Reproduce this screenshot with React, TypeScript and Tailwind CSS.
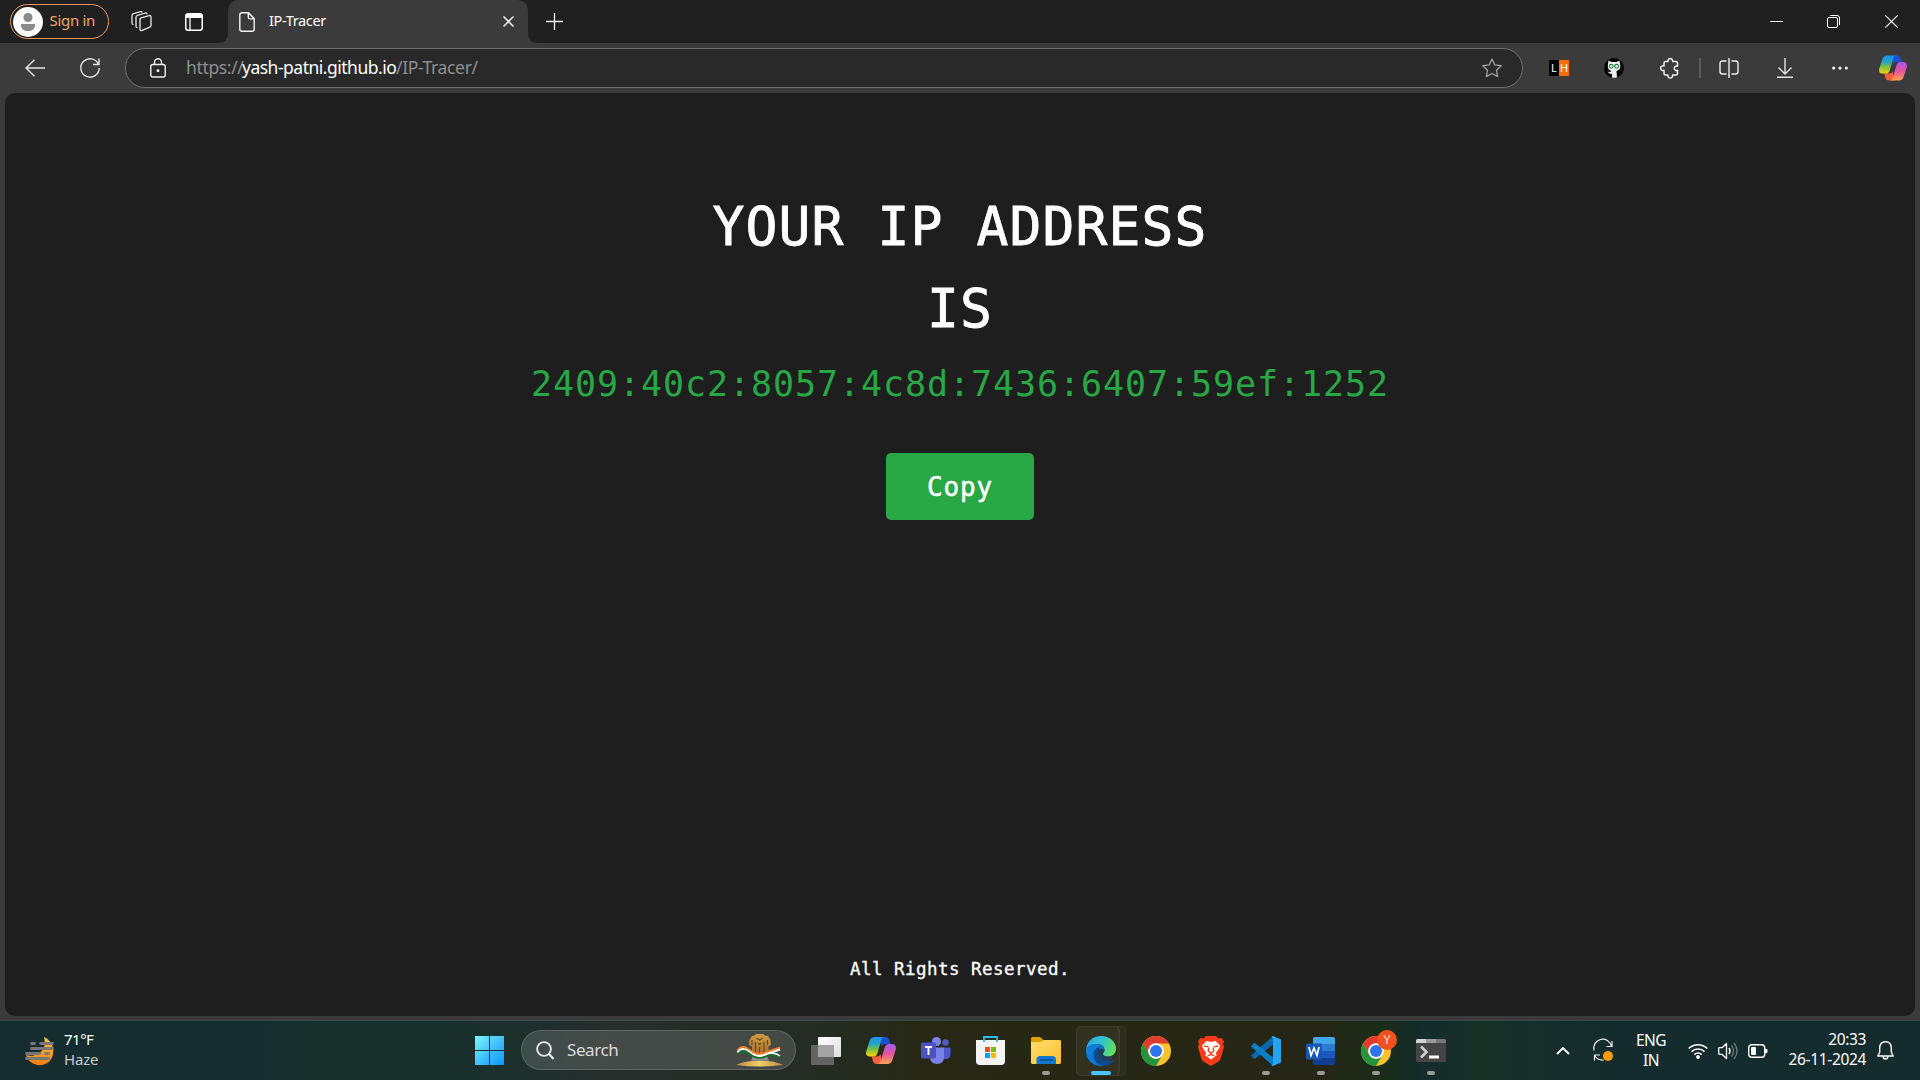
import React from "react";

const ui = "font-['Noto_Sans','Open_Sans',sans-serif]";

function Svg({ w, h, box, children, className = "" }: { w: number; h: number; box?: string; children: React.ReactNode; className?: string }) {
  return (
    <svg width={w} height={h} viewBox={box ?? `0 0 ${w} ${h}`} fill="none" className={`block shrink-0 overflow-visible ${className}`}>
      {children}
    </svg>
  );
}

function Copilot({ id, w, h }: { id: string; w: number; h: number }) {
  return (
    <Svg w={w} h={h} box="0 0 30 27">
      <defs>
        <linearGradient id={`${id}a`} x1="0" y1="0" x2="0" y2="1">
          <stop offset="0" stopColor="#1a8ff0" />
          <stop offset=".35" stopColor="#22a5c8" />
          <stop offset=".65" stopColor="#7fc23a" />
          <stop offset="1" stopColor="#ffd00a" />
        </linearGradient>
        <linearGradient id={`${id}b`} x1="0.3" y1="0" x2=".3" y2="1">
          <stop offset="0" stopColor="#a259ee" />
          <stop offset=".5" stopColor="#e4559c" />
          <stop offset="1" stopColor="#ffa34f" />
        </linearGradient>
      </defs>
      <path d="M14 0h5.500c2 0 3 1.200 3.600 3l1.300 4h-5.200c-2 0-3 .8-3.700 2.700z" fill="#1b4fd6" />
      <path d="M16 27h-5.500c-2 0-3-1.200-3.600-3l-1.300-4.500h5.200c2 0 3-.8 3.700-2.700z" fill="#f4603a" />
      <path d="M8.500 0H19c-2 0-3 1.200-3.700 3.400l-4 13c-.7 2-1.800 3.100-3.800 3.100H4c-3.500 0-4.600-2.500-3.700-5.500L3.600 4C4.400 1.400 6 0 8.500 0z" fill={`url(#${id}a)`} />
      <path d="M21.500 27H11c2 0 3-1.200 3.700-3.400l4-13c.7-2.300 1.800-3.600 3.800-3.600H26c3.500 0 4.600 3 3.700 6l-3.300 10c-.8 2.600-2.400 4-4.900 4z" fill={`url(#${id}b)`} />
    </Svg>
  );
}

function Chrome() {
  return (
    <Svg w={30} h={30} box="0 0 48 48">
      <circle cx="24" cy="24" r="24" fill="#fcc22e" />
      <path d="M3.200 12A24 24 0 0 1 44.800 12H24a12 12 0 0 0-10.400 18z" fill="#e03b2f" />
      <path d="M3.200 12A24 24 0 0 0 24 48l10.400-18a12 12 0 0 1-20.800 0z" fill="#24943f" />
      <circle cx="24" cy="24" r="12.500" fill="#fff" />
      <circle cx="24" cy="24" r="9.600" fill="#2b74ec" />
    </Svg>
  );
}

function TitleBar() {
  return (
    <div className="flex h-[43px] shrink-0 items-center bg-[#202020] text-white">
      <div className="ml-[10px] flex h-[35px] w-[99px] items-center rounded-full border-[1.500px] border-[#e79a61] pl-[1.500px]">
        <Svg w={30} h={30}>
          <circle cx="15" cy="15" r="15" fill="#fafafa" />
          <circle cx="15" cy="10.500" r="4.500" fill="#8a8a8a" />
          <path d="M8 17h14v1.500c0 3.500-3 5.500-7 5.500s-7-2-7-5.500z" fill="#8a8a8a" />
        </Svg>
        <span className="-mt-[2px] ml-[7px] whitespace-nowrap text-[15px] tracking-[-0.300px] text-[#f0a56e]">Sign in</span>
      </div>
      <Svg w={21} h={21} className="ml-[22px]">
        <g stroke="#e8e8e8" strokeWidth="1.300" strokeLinejoin="round" strokeLinecap="round">
          <path d="M9 8.500q0-1.200 1.200-1.600l8-2.300q1.800-.4 1.800 1.300v8.500q0 1.300-1.200 1.700l-7.600 3.200q-2.200.9-2.200-1z" />
          <path d="M6 16.500q-1-.3-1-1.600V6.300q0-1.500 1.500-2l8-2.300q1.300-.3 1.500.8" />
          <path d="M2 13.500q-1-.4-1-1.600V4.500Q1 3 2.500 2.600l7-2q1.300-.3 1.500.6" />
        </g>
      </Svg>
      <Svg w={18} h={18} className="ml-[33px]">
        <rect x=".75" y=".75" width="16.500" height="16.500" rx="2.500" stroke="#fff" strokeWidth="1.500" />
        <path d="M1 2.500Q1 1 3 1h12q2 0 2 1.500V5H1z" fill="#fff" />
        <path d="M5 5v12" stroke="#fff" strokeWidth="1.300" />
      </Svg>
      <Svg w={10} h={10} className="ml-[15px] self-end">
        <path d="M10 0v10H0Q10 10 10 0z" fill="#3b3b3b" />
      </Svg>
      <div className="flex h-full w-[300px] items-center rounded-t-[10px] bg-[#3b3b3b]">
        <Svg w={16} h={20} className="ml-[11px]">
          <path d="M3 .75h6.500l5.700 5.900V17q0 2.200-2.200 2.200H3Q.8 19.200.8 17V3Q.8.750 3 .75zM9.300 1v4.200q0 1.700 1.700 1.700h4" stroke="#f2f2f2" strokeWidth="1.400" />
        </Svg>
        <span className="-mt-[2px] ml-[14px] text-[14.500px] tracking-[-0.350px]">IP-Tracer</span>
        <Svg w={11} h={11} className="ml-auto mr-[14px]">
          <path d="M.5.500l10 10M10.500.500l-10 10" stroke="#fff" strokeWidth="1.400" />
        </Svg>
      </div>
      <Svg w={10} h={10} className="self-end">
        <path d="M0 0v10h10Q0 10 0 0z" fill="#3b3b3b" />
      </Svg>
      <Svg w={17} h={17} className="ml-[8px]">
        <path d="M8.500 0v17M0 8.500h17" stroke="#f0f0f0" strokeWidth="1.300" />
      </Svg>
      <Svg w={13} h={13} className="ml-auto">
        <path d="M0 6.500h13" stroke="#fff" />
      </Svg>
      <Svg w={13} h={13} className="ml-[44px]">
        <rect x=".5" y="2.500" width="10" height="10" rx="1.500" stroke="#fff" />
        <path d="M3 .5h7q2.500 0 2.500 2.500v7" stroke="#fff" />
      </Svg>
      <Svg w={13} h={13} className="ml-[45px] mr-[22px]">
        <path d="M.3.300l12.400 12.400M12.700.300L.3 12.700" stroke="#fff" strokeWidth="1.100" />
      </Svg>
    </div>
  );
}

function Toolbar() {
  return (
    <div className="flex h-[50px] shrink-0 items-center bg-[#3b3b3b] text-white">
      <Svg w={20} h={18} className="-mt-px ml-[25px]">
        <path d="M20 9H1M9.500.700L1 9l8.500 8.300" stroke="#e6e6e6" strokeWidth="1.400" />
      </Svg>
      <Svg w={20} h={20} className="ml-[35px]">
        <path d="M18.400 6.200A9.200 9.200 0 1 0 19.200 10M19 .5v6h-6" stroke="#e6e6e6" strokeWidth="1.400" />
      </Svg>
      <div className="ml-[25px] flex h-[40px] w-[1398px] items-center rounded-full border border-[#707070] bg-[#292929]">
        <Svg w={16} h={20} className="ml-[24px]">
          <rect x=".8" y="6.500" width="14.400" height="12.500" rx="2" stroke="#f0f0f0" strokeWidth="1.400" />
          <path d="M4.500 6.500V4.200a3.500 3.500 0 0 1 7 0v2.300" stroke="#f0f0f0" strokeWidth="1.400" />
          <circle cx="8" cy="12.700" r="1.400" fill="#fff" />
        </Svg>
        <div className="-mt-px ml-[20px] flex whitespace-nowrap text-[17.500px] text-[#8e8e8e]">
          <span className="w-[56px] tracking-[-0.350px]">https://</span>
          <span className="w-[154px] tracking-[-0.500px] text-white">yash-patni.github.io</span>
          <span className="tracking-[-0.350px]">/IP-Tracer/</span>
        </div>
        <Svg w={20} h={20} box="0 0 20 20" className="ml-auto mr-[20px]">
          <path d="M10 1l2.800 5.900 6.400.8-4.700 4.500 1.200 6.400L10 15.500l-5.700 3.100 1.200-6.400L.8 7.700l6.400-.8z" stroke="#a0a0a0" strokeWidth="1.300" strokeLinejoin="round" />
        </Svg>
      </div>
      <div className="ml-[26px] flex h-[16px] w-[20px] text-center text-[11px] leading-[16px]">
        <span className="w-[10px] bg-black">L</span>
        <span className="w-[10px] bg-[#ff6d0a]">H</span>
      </div>
      <Svg w={20} h={20} className="ml-[35px]">
        <circle cx="10" cy="10" r="10" fill="#000" />
        <path d="M4.500 2.500l3 1.500h5l3-1.500.8 5q.2 4.500-3.800 5.500l.5 6.200q-2.500 1-5 .2v-3.400Q5 16 3.500 13.500q2 1 4-.5Q3.500 12 3.800 7.500z" fill="#eee" />
        <circle cx="7.300" cy="8.300" r="1.900" stroke="#168b42" strokeWidth="1.100" />
        <circle cx="12.700" cy="8.300" r="1.900" stroke="#168b42" strokeWidth="1.100" />
      </Svg>
      <Svg w={20} h={20} className="ml-[36px]">
        <path d="M5.500 3.500h2.400a2.400 2.400 0 1 1 4.700 0H16q1.500 0 1.500 1.500v3.200a2.300 2.300 0 1 0 0 4.200v3.100q0 1.500-1.500 1.500h-3.500a2.400 2.400 0 1 1-4.600 0H5.500Q4 17 4 15.500v-3.200a2.400 2.400 0 1 1 0-4.400V5q0-1.500 1.500-1.500z" stroke="#f0f0f0" strokeWidth="1.500" strokeLinejoin="round" />
      </Svg>
      <div className="ml-[19px] h-5 w-[2px] bg-[#5c5c5c]" />
      <Svg w={20} h={20} className="ml-[18px]">
        <path d="M7.500 3H3.500Q1 3 1 5.500v8Q1 16 3.500 16h4M12.500 3h4Q19 3 19 5.500v8q0 2.500-2.500 2.500h-4M10 0v20" stroke="#f0f0f0" strokeWidth="1.400" />
      </Svg>
      <Svg w={16} h={20} className="ml-[38px]">
        <path d="M8 0v15.500M1.500 9.500L8 16l6.500-6.500M0 19.300h16" stroke="#e4e4e4" strokeWidth="1.400" />
      </Svg>
      <Svg w={16} h={4} className="ml-[39px]">
        <g fill="#f4f4f4">
          <circle cx="1.700" cy="2" r="1.600" />
          <circle cx="8" cy="2" r="1.600" />
          <circle cx="14.300" cy="2" r="1.600" />
        </g>
      </Svg>
      <div className="ml-[31px]">
        <Copilot id="top" w={28} h={26} />
      </div>
    </div>
  );
}

function Page() {
  return (
    <main className="mx-[5px] flex h-[923px] shrink-0 flex-col items-center rounded-[10px] bg-[#1e1e1e] font-['DejaVu_Sans_Mono',monospace] text-white">
      <h1 className="mt-[93px] text-center text-[53px] leading-[82px] tracking-[1.100px] [-webkit-text-stroke:0.8px_white]">
        YOUR IP ADDRESS
        <br />
        IS
      </h1>
      <p className="mt-[7px] h-[54px] text-[35px] leading-[54px] tracking-[0.930px] text-[#28a745]">2409:40c2:8057:4c8d:7436:6407:59ef:1252</p>
      <button className="mt-[42px] h-[67px] w-[148px] rounded-[5px] bg-[#28a745] pt-px text-[26px] tracking-[0.850px] [-webkit-text-stroke:0.5px_white]">Copy</button>
      <footer className="mb-[33px] mt-auto text-[17.500px] leading-[28px] tracking-[0.460px] [-webkit-text-stroke:0.3px_white]">All Rights Reserved.</footer>
    </main>
  );
}

function Weather() {
  return (
    <Svg w={30} h={28}>
      <defs>
        <linearGradient id="moon" x1="0" y1="0" x2="0" y2="1">
          <stop stopColor="#ffc83d" />
          <stop offset="1" stopColor="#f07c12" />
        </linearGradient>
      </defs>
      <path d="M19 0c13 6 12 24 0 27.500C11 30 3 25 1 18c9 3 22-3 18-18z" fill="url(#moon)" />
      <path d="M6.500 6.500h3M15.500 6.500h12M6.500 11.500h21M1.500 16.500h13.500M20.500 16.500h3M1.500 21.500h22" stroke="#787878" strokeWidth="2.800" strokeLinecap="round" />
    </Svg>
  );
}

function Emblem() {
  return (
    <Svg w={47} h={33}>
      <defs>
        <linearGradient id="gold" x1="0" y1="0" x2="0" y2="1">
          <stop stopColor="#d09a45" />
          <stop offset="1" stopColor="#a06c28" />
        </linearGradient>
        <linearGradient id="mound" x1="0" y1="0" x2="1" y2="0">
          <stop stopColor="#b98a35" />
          <stop offset=".5" stopColor="#f3cf6e" />
          <stop offset="1" stopColor="#b98a35" />
        </linearGradient>
      </defs>
      <path d="M0 31q9-4.500 23.500-4.500T47 31q-23 3-47 0z" fill="url(#mound)" />
      <path d="M17 22h14l2 4.500H15z" fill="#8f9298" />
      <path d="M20 0h7l2 1.500 3 .5 2.500 4 .5 5-2.500 1.500V23H16V12.500L13 11l.500-5L16 2l2.500-.5z" fill="url(#gold)" />
      <path d="M20.500 4l3 2 3-2M19.500 8v12M28 8v12M22 9.500q1.500 1.200 3 0M23.500 13v7M16 6v5M31.500 6v5" stroke="#6b4418" strokeWidth="1.100" />
      <path d="M1.500 16.500C5 12 9 12 13 15.500S24 22 32 17.500l12-4" stroke="#f07a24" strokeWidth="2.200" />
      <path d="M1.500 18.500C5 14 9 14 13 17.500S24 24 32 19.500l12-4" stroke="#fff" strokeWidth="2.200" />
      <path d="M2 20.500C5 16 9 16 13 19.500S24 26 32 21.500q6-1 12 2" stroke="#15702f" strokeWidth="1.800" />
      <path d="M34 19q6 0 10 3" stroke="#fff" strokeWidth="1.500" />
    </Svg>
  );
}

function TaskItem({ children, mark }: { children: React.ReactNode; mark?: boolean }) {
  return (
    <div className="relative flex h-[50px] w-[55px] shrink-0 items-center justify-center">
      {children}
      {mark && <span className="absolute bottom-[1px] left-[24px] h-[4px] w-[8px] rounded-full bg-[#9a9b93]" />}
    </div>
  );
}

function Edge() {
  return (
    <Svg w={30} h={30} className="relative">
      <defs>
        <linearGradient id="ea" x1="0" y1=".3" x2="1" y2=".6">
          <stop stopColor="#2aa8ea" />
          <stop offset=".5" stopColor="#30c4d2" />
          <stop offset="1" stopColor="#66e052" />
        </linearGradient>
        <linearGradient id="eb" x1="0" y1="0" x2=".6" y2="1">
          <stop stopColor="#1180d6" />
          <stop offset="1" stopColor="#0a78d8" />
        </linearGradient>
      </defs>
      <path d="M0 14C1 5 7 0 15 0c9 0 15 6 15 12.500 0 5-3.500 8-8 8-3 0-5-1-5-2.500 0-1 1.500-2 1.500-4C18.500 10 15 8 10.500 8 5 8 1.500 10.500 0 14z" fill="url(#ea)" />
      <path d="M0 14c1.500-4 5.500-6 10-6 5 0 8.500 3 8.500 6.500-1-1.500-3-2.300-5-1.500-2.500 1-3 4-3 6 0 6 4 10 8 10.200C17 30 15.500 30 14.500 30 6 29.800-.5 23 0 14z" fill="url(#eb)" />
      <path d="M7.500 19c0-4 2.500-7.500 6.500-8.500-3.500 5-1.500 14 8.500 14.500 2.500 0 4-.8 5-1.300.6-.2.900.2.600.700C26 27.500 22 29.800 18 29.800 12 29.800 7.500 25 7.500 19z" fill="#114a8b" />
      <path d="M13.300 12.500q3.500-1 5 1.500 0 2-1.300 3.200c-.5 1.500 1.500 3.300 5 3.300q2.500 0 4.800-1.200.5 3-1.800 4.400C19 26.500 9.500 21 13.300 12.500z" fill="#114a8b" opacity=".55" />
    </Svg>
  );
}

function TaskApps() {
  return (
    <div className="ml-[2px] flex items-center">
      <TaskItem>
        <Svg w={30} h={28}>
          <defs>
            <linearGradient id="tv" x1="0" y1="0" x2="1" y2="1">
              <stop stopColor="#fff" />
              <stop offset="1" stopColor="#dedede" />
            </linearGradient>
          </defs>
          <rect y="8" width="23" height="20" rx="1" fill="#636463" />
          <rect x="7" width="23" height="20" rx="1" fill="url(#tv)" />
          <path d="M7 8h16v12H7z" fill="#a3a3a3" />
        </Svg>
      </TaskItem>
      <TaskItem>
        <Copilot id="task" w={30} h={27} />
      </TaskItem>
      <TaskItem>
        <Svg w={30} h={27}>
          <circle cx="24.500" cy="5.500" r="3.200" fill="#5059c9" />
          <path d="M20 10.500h9.500V17q0 5-5 5H20z" fill="#5059c9" />
          <circle cx="15.500" cy="4.500" r="4.500" fill="#7b83eb" />
          <path d="M9 10.500h14v9q0 7.500-7 7.500t-7-7.500z" fill="#7b83eb" />
          <rect y="5.500" width="15" height="16" rx="1.500" fill="#4b53bc" />
          <path d="M4 10h7M7.500 10v8" stroke="#fff" strokeWidth="1.900" />
        </Svg>
      </TaskItem>
      <TaskItem>
        <Svg w={29} h={29}>
          <path d="M0 4h29v21q0 4-4 4H4q-4 0-4-4z" fill="#f4f4f4" />
          <path d="M8 6V1h13v5" stroke="#2dbcf0" strokeWidth="1.800" />
          <path d="M9 11h5v5H9z" fill="#f25022" />
          <path d="M15 11h5v5h-5z" fill="#7fba00" />
          <path d="M9 17h5v5H9z" fill="#00a4ef" />
          <path d="M15 17h5v5h-5z" fill="#ffb900" />
        </Svg>
      </TaskItem>
      <TaskItem mark>
        <Svg w={30} h={27}>
          <defs>
            <linearGradient id="folder" x1="0" y1="0" x2="1" y2="1">
              <stop stopColor="#ffdd6b" />
              <stop offset="1" stopColor="#fdbf2d" />
            </linearGradient>
          </defs>
          <path d="M0 1.500Q0 0 1.500 0H9l3.500 3H28.500Q30 3 30 4.500V10H0z" fill="#e0a100" />
          <path d="M0 5h10l3-2h15.500Q30 3 30 4.500v21q0 1.500-1.500 1.500h-27Q0 27 0 25.500z" fill="url(#folder)" />
          <path d="M5.500 27v-4.500Q5.500 19 9 19h12q4 0 4 3.500V27z" fill="#1279cf" />
          <path d="M9 23h13" stroke="#0a4f92" strokeWidth="1.500" />
        </Svg>
      </TaskItem>
      <div className="relative flex h-[50px] w-[55px] items-center justify-center">
        <div className="absolute left-[44px] top-0 h-[50px] w-[9px] rounded-r-[5px] border border-l-0 border-white/5 bg-white/[0.030]" />
        <div className="absolute left-[3px] top-0 h-[50px] w-[44px] rounded-[5px] border border-white/5 bg-white/5" />
        <Edge />
        <span className="absolute bottom-[1px] left-[18px] h-[4px] w-[20px] rounded-full bg-[#4cc2ff]" />
      </div>
      <TaskItem>
        <Chrome />
      </TaskItem>
      <TaskItem>
        <Svg w={26} h={30}>
          <path d="M8 0h10l2.500 2.500L23.500 2 26 5.500 25 8l1 3-3.500 12q-.5 1.500-2 2.500L13 30l-7.500-4.500q-1.500-1-2-2.500L0 11l1-3L0 5.500 2.500 2l3 .5z" fill="#fb3a1a" />
          <path d="M8.500 5L13 6l4.500-1L22 9.500l-1 3-3 4 .5 3-3.500 2.500L13 23.500 11 22l-3.500-2.500.5-3-3-4-1-3z" fill="#fff" />
          <path d="M6 10l4.500.8M20 10l-4.500.8M11 11.500l-.800 3L13 17.500l2.800-3-.800-3M9.500 20l3.500-1.700 3.500 1.700" stroke="#fb3a1a" strokeWidth="1.300" />
        </Svg>
      </TaskItem>
      <TaskItem mark>
        <Svg w={30} h={30}>
          <path d="M22 0L0 19.500l2.500 3q1 .8 2 0L22 8.500z" fill="#0868ad" />
          <path d="M22 30L0 10.500l2.500-3q1-.8 2 0L22 21.500z" fill="#0a7ec9" />
          <path d="M22 0l8 3.500v23L22 30q-1 .2-1.500-1L22 27V3l-1.500-2Q21-.2 22 0z" fill="#27a3f1" />
        </Svg>
      </TaskItem>
      <TaskItem mark>
        <Svg w={29} h={28}>
          <path d="M7 1.500Q7 0 8.500 0h19Q29 0 29 1.500V7H7z" fill="#41a5ee" />
          <path d="M7 7h22v7H7z" fill="#2b7cd3" />
          <path d="M7 14h22v7H7z" fill="#185abd" />
          <path d="M7 21h22v5.500q0 1.500-1.500 1.500h-19Q7 28 7 26.500z" fill="#103f91" />
          <rect y="6.500" width="16" height="16" rx="1.500" fill="#1856b5" />
          <path d="M3 10l2 8.500L8 11l3 7.500L13 10" stroke="#fff" strokeWidth="1.700" />
        </Svg>
      </TaskItem>
      <TaskItem mark>
        <Chrome />
        <span className="absolute left-[29px] top-[4px] flex h-[20px] w-[20px] items-center justify-center rounded-full bg-[#f4511e] text-[13px] leading-none text-[#ffd9c9]">Y</span>
      </TaskItem>
      <TaskItem mark>
        <Svg w={30} h={23}>
          <rect width="30" height="23" rx="1.500" fill="#454545" />
          <path d="M0 4V1.500Q0 0 1.500 0H10v4z" fill="#d2d2d2" />
          <path d="M10 0h10v4H10z" fill="#9b9b9b" />
          <path d="M20 0h8.500Q30 0 30 1.500V4H20z" fill="#777" />
          <path d="M5 7.500l5.500 5.500L5 18.500" stroke="#d0d0d0" strokeWidth="2.600" />
          <path d="M13 18h10" stroke="#fff" strokeWidth="3" />
        </Svg>
      </TaskItem>
    </div>
  );
}

function Tray() {
  return (
    <div className="ml-auto flex h-full items-center">
      <Svg w={14} h={8}>
        <path d="M1 7l6-6 6 6" stroke="#fff" strokeWidth="1.800" />
      </Svg>
      <Svg w={21} h={20} className="ml-[23px]">
        <path d="M1 9.500A9 9 0 0 1 18.500 5M19 0v5.500h-5.500M1.500 19.500V14H7M1.800 14.500a9 9 0 0 0 9 4.500" stroke="#f0f0f0" strokeWidth="1.200" />
        <circle cx="15" cy="15" r="5" fill="#ff9a0a" />
      </Svg>
      <div className="-mt-[2px] ml-[19px] w-[36px] text-center text-[15.500px] leading-[20px] tracking-[-0.600px]">
        ENG
        <br />
        IN
      </div>
      <Svg w={20} h={16} className="ml-[19px]">
        <path d="M.7 5.500a13.500 13.500 0 0 1 18.600 0M3.500 8.600a9.500 9.500 0 0 1 13 0M6.300 11.600a5.300 5.300 0 0 1 7.400 0" stroke="#fff" strokeWidth="1.500" />
        <circle cx="10" cy="14" r="1.900" fill="#fff" />
      </Svg>
      <Svg w={20} h={18} className="ml-[10px]">
        <path d="M.7 6.500q0-.8.8-.8H4L8.500 1.500v15L4 12.300H1.500q-.8 0-.8-.8z" stroke="#fff" strokeWidth="1.300" strokeLinejoin="round" />
        <path d="M11 6q2 3 0 6" stroke="#fff" strokeWidth="1.400" />
        <path d="M13.500 3.500q4 5.500 0 11M16 1q6 8 0 16" stroke="#667877" strokeWidth="1.400" />
      </Svg>
      <Svg w={20} h={14} className="ml-[10px]">
        <rect x=".7" y=".7" width="16" height="12.600" rx="3" stroke="#fff" strokeWidth="1.400" />
        <rect x="3" y="3" width="5" height="8" rx="1" fill="#fff" />
        <path d="M17 4.500l2.500 1v3l-2.500 1z" fill="#fff" />
      </Svg>
      <div className="-mt-[4px] ml-[18px] w-[80px] whitespace-nowrap text-right text-[15.500px] leading-[20px] tracking-[-0.350px]">
        20:33
        <br />
        26-11-2024
      </div>
      <Svg w={17} h={19} className="ml-[11px] mr-[26px]">
        <path d="M8.500.800q5.500 0 5.800 6v4.400l1.900 3.800H.8l1.900-3.800V6.800q.3-6 5.800-6z" stroke="#fff" strokeWidth="1.400" strokeLinejoin="round" />
        <path d="M6 15.500q.5 2.500 2.500 2.500t2.500-2.500" stroke="#fff" strokeWidth="1.400" />
      </Svg>
    </div>
  );
}

export default function App() {
  return (
    <div className={`flex h-[1080px] w-[1920px] flex-col overflow-hidden bg-[#3b3b3b] ${ui}`}>
      <TitleBar />
      <Toolbar />
      <Page />
      <div className="mt-auto flex h-[60px] shrink-0 items-center border-t border-[#3c4a49] bg-[linear-gradient(90deg,#152d2f_0%,#152d2f_13%,#182f2a_17%,#182f2a_23%,#1b302c_26%,#272d2b_32%,#242c25_42%,#272816_48%,#262616_69%,#1a2d19_72%,#142c2b_74%,#182f26_77%,#142c2e_85%)] text-white">
        <div className="flex w-[475px] items-center pl-[25px]">
          <Weather />
          <div className="-mt-[4px] ml-[9px] text-[15px] leading-[20px] tracking-[-0.500px]">
            71°F
            <div className="tracking-[-0.200px] text-[#c4cccc]">Haze</div>
          </div>
        </div>
        <Svg w={29} h={29}>
          <defs>
            <linearGradient id="win" x1="0" y1="0" x2="29" y2="29" gradientUnits="userSpaceOnUse">
              <stop stopColor="#7df3ff" />
              <stop offset="1" stopColor="#0a94fb" />
            </linearGradient>
          </defs>
          <path d="M0 0h14v14H0zM15 0h14v14H15zM0 15h14v14H0zM15 15h14v14H15z" fill="url(#win)" />
        </Svg>
        <div className="-mt-px ml-[17px] flex h-[40px] w-[275px] items-center rounded-full border border-white/15 bg-white/[0.140] pl-[14px] pr-[12px]">
          <Svg w={18} h={19}>
            <circle cx="8" cy="8" r="6.900" stroke="#e4e8e8" strokeWidth="1.900" />
            <path d="M13 13l4.500 5" stroke="#e4e8e8" strokeWidth="2.200" />
          </Svg>
          <span className="ml-[13px] text-[17px] tracking-[-0.400px] text-[#d9dcdc]">Search</span>
          <div className="ml-auto">
            <Emblem />
          </div>
        </div>
        <TaskApps />
        <Tray />
      </div>
    </div>
  );
}
